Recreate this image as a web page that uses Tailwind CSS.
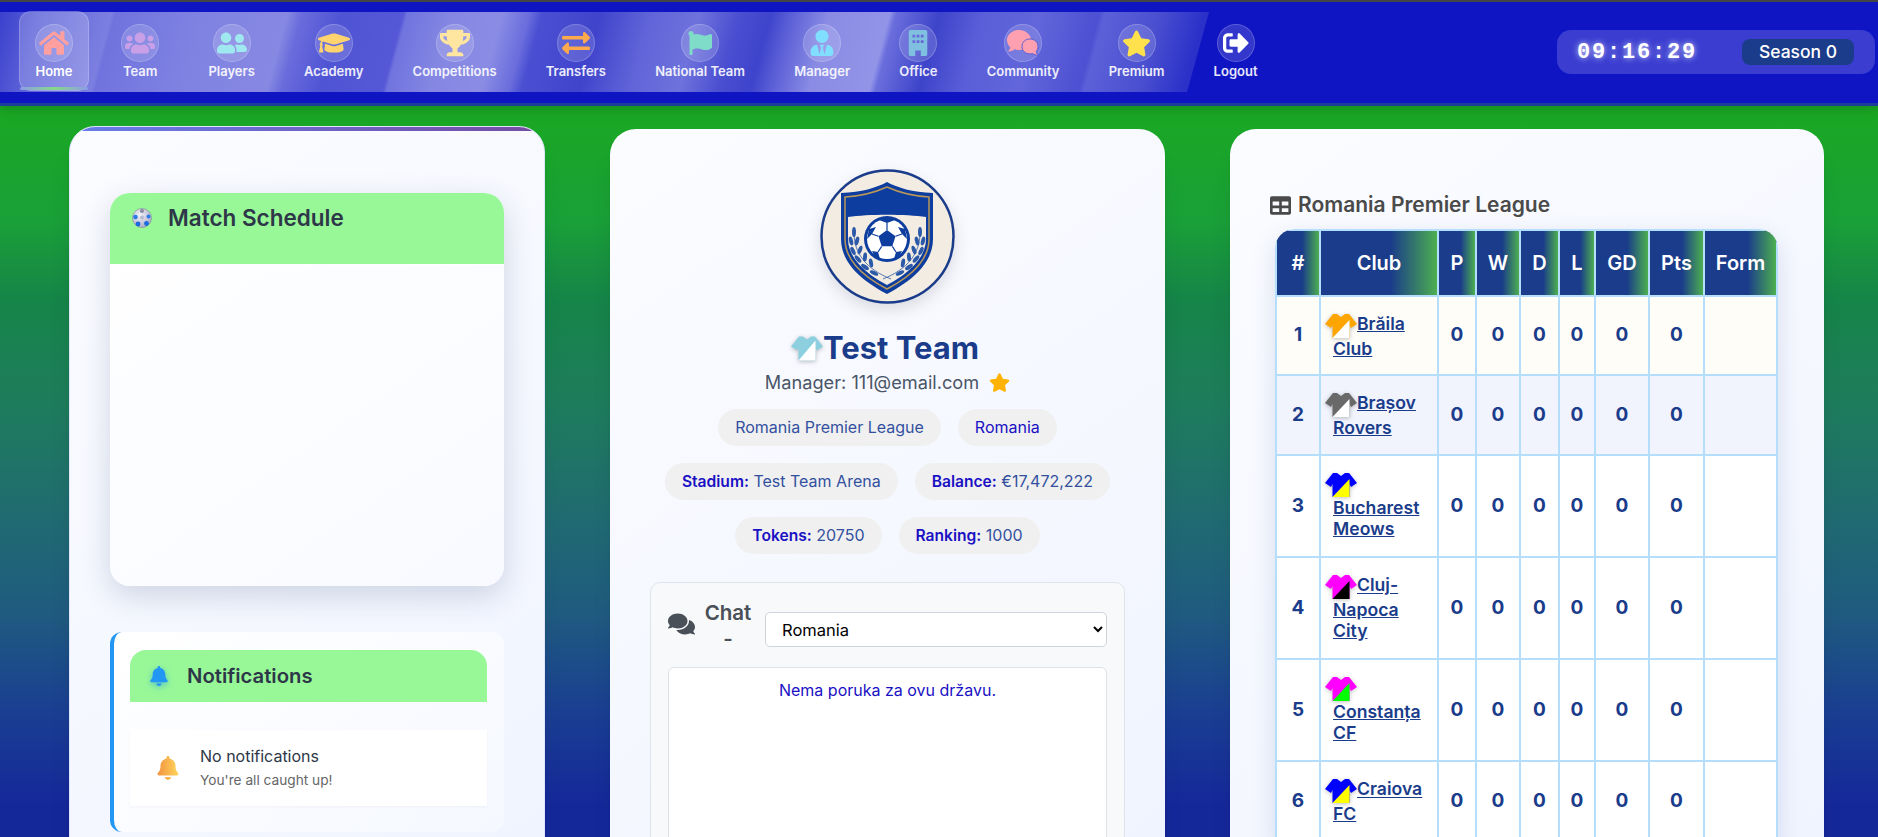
<!DOCTYPE html>
<html lang="en">
<head>
    <meta charset="UTF-8" />
    <title>Home - Football Manager</title>
    <script src="https://cdn.jsdelivr.net/npm/@tailwindcss/browser@4"></script>
</head>
<body class="h-screen overflow-hidden font-['Inter',sans-serif] bg-[linear-gradient(180deg,#1aa822_106px,#1aa038_220px,#168548_300px,#1e7c5c_405px,#206a72_523px,#1f5a80_617px,#1a3f92_711px,#15289a_805px)]">

    <!-- Top navigation -->
    <header class="relative z-10 h-[106px] bg-[#1015c4] border-t-2 border-t-[#444444] border-b-[3px] border-b-[#1c3f9a] shadow-[0_4px_12px_rgba(0,0,0,0.15)] flex items-start">
        <div class="absolute left-0 top-[10px] w-[1209px] h-[80px] [clip-path:polygon(0_0,1209px_0,1187px_100%,0_100%)] bg-[linear-gradient(105deg,#3a40cc_0px,#5b60d8_40px,#7c7fe0_108px,#7073dd_112px,#7a7de0_165px,#8082e2_195px,#8688e2_278px,#6a6cdc_292px,#4f54d4_330px,#5558d6_390px,#7074de_394px,#8486e2_435px,#8a8ce4_485px,#6a6ddc_512px,#4a4fd2_524px,#4044cc_580px,#6064d8_628px,#6e72dc_676px,#4a4ed0_715px,#3e44cc_745px,#5a5ed6_764px,#8a8ce4_802px,#9294e8_860px,#6a6edc_866px,#3e44ca_908px,#5a5ed8_950px,#6266da_1005px,#4c50d2_1062px,#5c60d8_1068px,#4a4fd0_1120px,#2a30c8_1165px)]"></div>

        <nav class="relative flex items-start gap-[15.2px] pl-[19px] pt-[9px]">
            <a class="relative flex flex-col items-center w-[70px] h-[80px] pt-[12px] rounded-[12px] border border-white/20 bg-white/20 text-white">
                <span class="flex items-center justify-center w-[38px] h-[38px] rounded-full bg-white/15 border border-white/20">
                    <svg class="w-[30px] h-[30px] fill-[#ff9f9f]" viewBox="0 0 576 512"><path d="M280.37 148.26L96 300.11V464a16 16 0 0 0 16 16l112.06-.29a16 16 0 0 0 15.92-16V368a16 16 0 0 1 16-16h64a16 16 0 0 1 16 16v95.64a16 16 0 0 0 16 16.05L464 480a16 16 0 0 0 16-16V300L295.67 148.26a12.19 12.19 0 0 0-15.3 0zM571.6 251.47L488 182.56V44.05a12 12 0 0 0-12-12h-56a12 12 0 0 0-12 12v72.61L318.47 43a48 48 0 0 0-61 0L4.34 251.47a12 12 0 0 0-1.6 16.9l25.5 31A12 12 0 0 0 45.15 301l235.22-193.74a12.19 12.19 0 0 1 15.3 0L530.9 301a12 12 0 0 0 16.9-1.6l25.5-31a12 12 0 0 0-1.7-16.93z"/></svg>
                </span>
                <span class="text-[13px] font-semibold leading-[18px]">Home</span>
                <span class="absolute left-0 right-0 bottom-[0px] h-[3px] rounded-full bg-[linear-gradient(90deg,#8c9ce8,#86d98a,#8c9ce8)]"></span>
            </a>
            <a class="flex flex-col items-center px-[17px] pt-[13px] text-white/90">
                <span class="flex items-center justify-center w-[38px] h-[38px] rounded-full bg-white/15 border border-white/20">
                    <svg class="w-[30px] h-[30px] fill-[#c9a0e8]" viewBox="0 0 640 512"><path d="M96 224c35.3 0 64-28.7 64-64s-28.7-64-64-64-64 28.7-64 64 28.7 64 64 64zm448 0c35.3 0 64-28.7 64-64s-28.7-64-64-64-64 28.7-64 64 28.7 64 64 64zm32 32h-64c-17.6 0-33.5 7.1-45.1 18.6 40.3 22.1 68.9 62 75.1 109.4h66c17.7 0 32-14.3 32-32v-32c0-35.3-28.7-64-64-64zm-256 0c61.9 0 112-50.1 112-112S381.9 32 320 32 208 82.1 208 144s50.1 112 112 112zm76.8 32h-8.3c-20.8 10-43.9 16-68.5 16s-47.6-6-68.5-16h-8.3C179.6 288 128 339.6 128 403.2V432c0 26.5 21.5 48 48 48h288c26.5 0 48-21.5 48-48v-28.8c0-63.6-51.6-115.2-115.2-115.2zm-223.7-13.4C161.5 263.1 145.6 256 128 256H64c-35.3 0-64 28.7-64 64v32c0 17.7 14.3 32 32 32h65.9c6.3-47.4 34.9-87.3 75.2-109.4z"/></svg>
                </span>
                <span class="text-[13px] font-semibold leading-[18px]">Team</span>
            </a>
            <a class="flex flex-col items-center px-[17px] pt-[13px] text-white/90">
                <span class="flex items-center justify-center w-[38px] h-[38px] rounded-full bg-white/15 border border-white/20">
                    <svg class="w-[30px] h-[30px] fill-[#a0e8f0]" viewBox="0 0 640 512"><path d="M192 256c61.9 0 112-50.1 112-112S253.9 32 192 32 80 82.1 80 144s50.1 112 112 112zm76.8 32h-8.3c-20.8 10-43.9 16-68.5 16s-47.6-6-68.5-16h-8.3C51.6 288 0 339.6 0 403.2V432c0 26.5 21.5 48 48 48h288c26.5 0 48-21.5 48-48v-28.8c0-63.6-51.6-115.2-115.2-115.2zM480 256c53 0 96-43 96-96s-43-96-96-96-96 43-96 96 43 96 96 96zm48 32h-3.8c-13.9 4.8-28.6 8-44.2 8s-30.3-3.2-44.2-8H432c-20.4 0-39.2 5.9-55.7 15.4 24.4 26.3 39.7 61.2 39.7 99.8v38.4c0 2.2-.5 4.3-.6 6.4H592c26.5 0 48-21.5 48-48 0-61.9-50.1-112-112-112z"/></svg>
                </span>
                <span class="text-[13px] font-semibold leading-[18px]">Players</span>
            </a>
            <a class="flex flex-col items-center px-[17px] pt-[13px] text-white/90">
                <span class="flex items-center justify-center w-[38px] h-[38px] rounded-full bg-white/15 border border-white/20">
                    <svg class="w-[32px] h-[30px] fill-[#ffd36e]" viewBox="0 0 640 512"><path d="M622.34 153.2L343.4 67.5c-15.2-4.67-31.6-4.67-46.79 0L17.66 153.2c-23.54 7.23-23.54 38.36 0 45.59l48.63 14.94c-10.67 13.19-17.23 29.28-17.88 46.9C38.78 266.15 32 276.11 32 288c0 10.78 5.68 19.85 13.86 25.65L20.33 428.53C18.11 438.52 25.71 448 35.94 448h56.11c10.24 0 17.84-9.48 15.62-19.47L82.14 313.65C90.32 307.85 96 298.78 96 288c0-11.57-6.47-21.25-15.66-26.87.76-15.02 8.44-28.3 20.69-36.72L296.6 284.5c9.06 2.78 26.44 6.25 46.79 0l278.95-85.7c23.55-7.24 23.55-38.36 0-45.6zM352.79 315.09c-28.53 8.76-52.84 3.92-65.59 0l-145.02-44.55L128 384c0 35.35 85.96 64 192 64s192-28.65 192-64l-14.18-113.47-145.03 44.56z"/></svg>
                </span>
                <span class="text-[13px] font-semibold leading-[18px]">Academy</span>
            </a>
            <a class="flex flex-col items-center px-[17px] pt-[13px] text-white/90">
                <span class="flex items-center justify-center w-[38px] h-[38px] rounded-full bg-white/15 border border-white/20">
                    <svg class="w-[30px] h-[28px] fill-[#ffe6a0]" viewBox="0 0 576 512"><path d="M552 64H448V24c0-13.3-10.7-24-24-24H152c-13.3 0-24 10.7-24 24v40H24C10.7 64 0 74.7 0 88v56c0 35.7 22.5 72.4 61.9 100.7 31.5 22.7 69.8 37.1 110 41.7C203.3 338.5 240 360 240 360v72h-48c-35.3 0-64 20.7-64 56v12c0 6.6 5.4 12 12 12h296c6.6 0 12-5.4 12-12v-12c0-35.3-28.7-56-64-56h-48v-72s36.7-21.5 68.1-73.6c40.3-4.6 78.6-19 110-41.7 39.3-28.3 61.9-65 61.9-100.7V88c0-13.3-10.7-24-24-24zM99.3 192.8C74.9 175.2 64 155.6 64 144v-16h64.2c1 32.6 5.8 61.2 12.8 86.2-15.1-5.2-29.2-12.4-41.7-21.4zM512 144c0 16.1-17.7 36.1-35.3 48.8-12.5 9-26.7 16.2-41.8 21.4 7-25 11.8-53.6 12.8-86.2H512v16z"/></svg>
                </span>
                <span class="text-[13px] font-semibold leading-[18px]">Competitions</span>
            </a>
            <a class="flex flex-col items-center px-[17px] pt-[13px] text-white/90">
                <span class="flex items-center justify-center w-[38px] h-[38px] rounded-full bg-white/15 border border-white/20">
                    <svg class="w-[28px] h-[28px] fill-[#ffa94d]" viewBox="0 0 512 512"><path d="M0 168v-16c0-13.255 10.745-24 24-24h360V80c0-21.367 25.899-32.042 40.971-16.971l80 80c9.372 9.373 9.372 24.569 0 33.941l-80 80C409.956 271.982 384 261.456 384 240v-48H24c-13.255 0-24-10.745-24-24zm488 152H128v-48c0-21.314-25.862-32.08-40.971-16.971l-80 80c-9.372 9.373-9.372 24.569 0 33.941l80 80C102.057 463.997 128 453.437 128 432v-48h360c13.255 0 24-10.745 24-24v-16c0-13.255-10.745-24-24-24z"/></svg>
                </span>
                <span class="text-[13px] font-semibold leading-[18px]">Transfers</span>
            </a>
            <a class="flex flex-col items-center px-[17px] pt-[13px] text-white/90">
                <span class="flex items-center justify-center w-[38px] h-[38px] rounded-full bg-white/15 border border-white/20">
                    <svg class="w-[24px] h-[26px] fill-[#7fdcc8]" viewBox="0 0 512 512"><path d="M349.565 98.783C295.978 98.783 251.721 64 184.348 64c-24.955 0-47.309 4.384-68.045 12.013a55.947 55.947 0 0 0 3.586-23.562C118.117 24.015 94.806 1.206 66.338.048 34.345-1.254 8 24.296 8 56c0 19.026 9.497 35.825 24 45.945V488c0 13.255 10.745 24 24 24h16c13.255 0 24-10.745 24-24v-94.4c28.311-12.064 63.582-22.122 114.435-22.122 53.588 0 97.844 34.783 165.217 34.783 48.169 0 86.667-16.294 122.505-40.858C506.84 359.452 512 349.571 512 339.045v-243.1c0-23.393-24.269-38.87-45.485-29.016-34.338 15.948-76.454 31.854-116.95 31.854z"/></svg>
                </span>
                <span class="text-[13px] font-semibold leading-[18px]">National Team</span>
            </a>
            <a class="flex flex-col items-center px-[17px] pt-[13px] text-white/90">
                <span class="flex items-center justify-center w-[38px] h-[38px] rounded-full bg-white/15 border border-white/20">
                    <svg class="w-[26px] h-[26px] fill-[#80dfff]" viewBox="0 0 448 512"><path d="M224 256c70.7 0 128-57.3 128-128S294.7 0 224 0 96 57.3 96 128s57.3 128 128 128zm95.8 32.6L272 480l-32-136 32-56h-96l32 56-32 136-47.8-191.4C56.9 292 0 350.3 0 422.4V464c0 26.5 21.5 48 48 48h352c26.5 0 48-21.5 48-48v-41.6c0-72.1-56.9-130.4-128.2-133.8z"/></svg>
                </span>
                <span class="text-[13px] font-semibold leading-[18px]">Manager</span>
            </a>
            <a class="flex flex-col items-center px-[17px] pt-[13px] text-white/90">
                <span class="flex items-center justify-center w-[38px] h-[38px] rounded-full bg-white/15 border border-white/20">
                    <svg class="w-[24px] h-[26px] fill-[#7fbfdf]" viewBox="0 0 24 28"><path fill-rule="evenodd" d="M4 0h16a2 2 0 0 1 2 2v24a2 2 0 0 1-2 2h-5v-6h-6v6H4a2 2 0 0 1-2-2V2a2 2 0 0 1 2-2zM6 5v3h3V5zM10.500 5v3h3V5zM15 5v3h3V5zM6 11v3h3v-3zM10.500 11v3h3v-3zM15 11v3h3v-3z"/></svg>
                </span>
                <span class="text-[13px] font-semibold leading-[18px]">Office</span>
            </a>
            <a class="flex flex-col items-center px-[17px] pt-[13px] text-white/90">
                <span class="flex items-center justify-center w-[38px] h-[38px] rounded-full bg-white/15 border border-white/20">
                    <svg class="w-[34px] h-[30px]" viewBox="0 0 34 30"><path fill="#ffa0b0" d="M13 2c6.600 0 12 4.500 12 10s-5.400 10-12 10c-1.500 0-3-.2-4.300-.7C7 22.700 4.600 23.500 2 23.500c1.300-1.300 2.100-2.800 2.300-4.300C2.200 17.400 1 14.800 1 12 1 6.500 6.400 2 13 2z"/><path fill="#ffa0b0" stroke="#5a5fd6" stroke-width="1" d="M24 11c4.700 0 8 3.200 8 7.500 0 1.900-.7 3.700-1.800 5 .2 1.400.9 2.700 2 3.800-2.200 0-4.100-.6-5.600-1.800-.8.300-1.700.4-2.600.4-4.700 0-8-3.200-8-7.400 0-4.300 3.300-7.500 8-7.500z"/></svg>
                </span>
                <span class="text-[13px] font-semibold leading-[18px]">Community</span>
            </a>
            <a class="flex flex-col items-center px-[17px] pt-[13px] text-white/90">
                <span class="flex items-center justify-center w-[38px] h-[38px] rounded-full bg-white/15 border border-white/20">
                    <svg class="w-[29px] h-[29px] fill-[#ffe14d]" viewBox="0 0 576 512"><path d="M259.3 17.8L194 150.2 47.9 171.5c-26.2 3.8-36.7 36.1-17.7 54.6l105.7 103-25 145.5c-4.5 26.3 23.2 46 46.4 33.7L288 439.6l130.7 68.7c23.2 12.2 50.9-7.4 46.4-33.7l-25-145.5 105.7-103c19-18.5 8.5-50.800-17.700-54.600L382 150.200 316.700 17.800c-11.700-23.600-45.600-23.900-57.400 0z"/></svg>
                </span>
                <span class="text-[13px] font-semibold leading-[18px]">Premium</span>
            </a>
            <a class="flex flex-col items-center px-[17px] pt-[13px] text-white/90">
                <span class="flex items-center justify-center w-[38px] h-[38px] rounded-full bg-white/15 border border-white/20">
                    <svg class="w-[26px] h-[26px] fill-white" viewBox="0 0 512 512"><path d="M497 273L329 441c-15 15-41 4.500-41-17v-96H152c-13.300 0-24-10.700-24-24v-96c0-13.300 10.700-24 24-24h136V88c0-21.400 25.900-32 41-17l168 168c9.300 9.400 9.300 24.600 0 34zM192 436v-40c0-6.600-5.400-12-12-12H96c-17.700 0-32-14.300-32-32V160c0-17.700 14.300-32 32-32h84c6.600 0 12-5.400 12-12V76c0-6.600-5.400-12-12-12H96c-53 0-96 43-96 96v192c0 53 43 96 96 96h84c6.600 0 12-5.400 12-12z"/></svg>
                </span>
                <span class="text-[13px] font-semibold leading-[18px]">Logout</span>
            </a>
        </nav>

        <!-- Clock and season -->
        <div class="ml-auto mr-[3px] mt-[28px] flex items-center justify-between w-[318px] h-[44px] pl-[20px] pr-[21px] rounded-[14px] bg-[#3a3dd0] text-white">
            <span class="font-['Liberation_Mono',monospace] font-bold text-[22px] tracking-[1.8px] [text-shadow:0_0_6px_rgba(255,255,255,0.8)]">09:16:29</span>
            <span class="flex items-center justify-center w-[112px] h-[26px] rounded-[8px] bg-[#1a3c8a] text-[17.5px] font-medium">Season 0</span>
        </div>
    </header>

    <main class="flex items-start pl-[69px] pt-[23px] gap-[65px]">

        <!-- Left column -->
        <section class="relative -mt-[3px] w-[476px] h-[760px] px-[40px] pt-[66px] rounded-[26px] overflow-hidden border border-[#dfe5fb] bg-[linear-gradient(145deg,#fbfcff,#f0f4ff)] shadow-xl">
            <div class="absolute left-0 right-0 top-0 h-[4px] bg-[linear-gradient(90deg,#667eea,#764ba2)]"></div>

            <div class="h-[393px] rounded-[20px] overflow-hidden bg-[linear-gradient(145deg,#ffffff,#f8faff)] shadow-[0_10px_30px_rgba(30,50,100,0.18)]">
                <div class="flex items-start h-[72px] pl-[22px] pt-[9px] gap-[16px] bg-[#98f898] border-b border-white">
                    <svg class="w-[20px] h-[20px] mt-[6px]" viewBox="0 0 20 20"><defs><radialGradient id="ballGrad" cx="0.4" cy="0.35" r="0.7"><stop offset="0" stop-color="#f4f4fb"/><stop offset="1" stop-color="#a8a8c4"/></radialGradient></defs><circle cx="10" cy="10" r="9.500" fill="url(#ballGrad)" stroke="#77778f" stroke-width="0.500"/><circle cx="10" cy="3" r="2" fill="#8a8aa6"/><circle cx="3.500" cy="9" r="2.300" fill="#2a7ae8"/><circle cx="16.500" cy="8.500" r="2" fill="#2a7ae8"/><circle cx="6" cy="16" r="2.400" fill="#1c68e0"/><circle cx="14.500" cy="15.500" r="2.400" fill="#1c68e0"/><circle cx="10" cy="9.500" r="2" fill="#b8b8d0"/></svg>
                    <h2 class="text-[22.5px] font-semibold leading-[32px] text-[#2d3748]">Match Schedule</h2>
                </div>
            </div>

            <div class="relative mt-[46px] h-[200px] pl-[16px] pr-[17px] pt-[18px] rounded-[12px] border-l-4 border-l-[#2196f3] bg-[linear-gradient(145deg,#ffffff,#f5f8ff)]">
                <div class="flex items-center h-[52px] pl-[20px] gap-[19px] rounded-t-[16px] bg-[#98f898]">
                    <svg class="w-[18px] h-[20px] fill-[#2196f3] drop-shadow-[0_2px_3px_rgba(33,150,243,0.6)]" viewBox="0 0 448 512"><path d="M224 512c35.320 0 63.970-28.650 63.970-64H160.030c0 35.350 28.650 64 63.970 64zm215.390-149.710c-19.320-20.760-55.470-51.990-55.470-154.290 0-77.700-54.480-139.900-127.940-155.160V32c0-17.670-14.320-32-31.980-32s-31.980 14.330-31.980 32v20.840C118.560 68.100 64.080 130.300 64.080 208c0 102.300-36.150 133.530-55.470 154.290-6 6.450-8.660 14.160-8.610 21.710.11 16.400 12.980 32 32.100 32h383.800c19.120 0 32-15.600 32.100-32 .05-7.550-2.610-15.270-8.610-21.710z"/></svg>
                    <h3 class="text-[20.3px] font-semibold text-[#2d3748]">Notifications</h3>
                </div>
                <div class="mt-[28px] flex items-center h-[76px] pl-[27px] gap-[21px] bg-white shadow-[0_1px_3px_rgba(0,0,0,0.04)]">
                    <svg class="w-[22px] h-[24px]" viewBox="0 0 448 512"><defs><linearGradient id="bellGrad" x1="0" x2="1" y1="0" y2="0"><stop offset="0" stop-color="#f2933f"/><stop offset="1" stop-color="#ffd65c"/></linearGradient></defs><path fill="url(#bellGrad)" d="M224 512c35.320 0 63.970-28.650 63.970-64H160.030c0 35.350 28.650 64 63.970 64zm215.390-149.710c-19.320-20.760-55.470-51.990-55.470-154.290 0-77.700-54.480-139.900-127.940-155.160V32c0-17.670-14.320-32-31.980-32s-31.980 14.330-31.980 32v20.840C118.560 68.100 64.080 130.300 64.080 208c0 102.300-36.150 133.530-55.470 154.290-6 6.450-8.660 14.160-8.610 21.710.11 16.400 12.980 32 32.100 32h383.800c19.120 0 32-15.600 32.100-32 .05-7.550-2.610-15.270-8.610-21.710z"/></svg>
                    <div>
                        <p class="text-[16px] leading-[24px] text-[#2d3748]">No notifications</p>
                        <p class="text-[13.7px] leading-[24px] text-[#666666]">You're all caught up!</p>
                    </div>
                </div>
            </div>
        </section>

        <!-- Center column -->
        <section class="flex flex-col items-center w-[555px] h-[760px] px-[40px] pt-[40px] rounded-[26px] bg-[linear-gradient(145deg,#fbfcff,#f0f4ff)] shadow-xl">
            <svg class="w-[135px] h-[135px] drop-shadow-[0_6px_8px_rgba(0,0,0,0.12)]" viewBox="0 0 135 135">
                <circle cx="67.500" cy="67.500" r="66" fill="#f3ece2" stroke="#1a3c8a" stroke-width="2.500"/>
                <path d="M67 13 C 78 19 92 23 113 24 L 113 70 C 113 95 90 113 67 125 C 44 113 21 95 21 70 L 21 24 C 42 23 56 19 67 13 Z" fill="#0d3d9e"/>
                <path d="M67 18 C 78 23 92 27 109 28 L 109 70 C 109 92 88 109 67 120 C 46 109 25 92 25 70 L 25 28 C 42 27 56 23 67 18 Z" fill="#0d3d9e" stroke="#b8975a" stroke-width="1.500"/>
                <path d="M28 48 C 48 45 86 45 106 48 L 106 70 C 106 90 86 106 67 116 C 48 106 28 90 28 70 Z" fill="#f3ece2"/>
                <circle cx="67" cy="70" r="23" fill="#0d3d9e"/>
                <circle cx="67" cy="70" r="20" fill="#ffffff"/>
                <polygon points="67,61 75.500,67.200 72.300,77.300 61.700,77.300 58.500,67.200" fill="#0d3d9e"/>
                <path d="M67 61 V 54 M75.500 67.200 L 82 65 M72.300 77.300 L 76 83 M61.700 77.300 L 58 83 M58.500 67.200 L 52 65" stroke="#0d3d9e" stroke-width="1.200"/>
                <path d="M59 51 L 67 54 L 75 51 L 67 48 Z M 47 70 L 52 65 L 56 58 L 49 60 Z M 87 70 L 82 65 L 78 58 L 85 60 Z M 52 82 L 58 83 L 60 90 L 55 88 Z M 82 82 L 76 83 L 74 90 L 79 88 Z" fill="#0d3d9e"/>
                <g id="laurel" fill="#2c5aa8">
                    <ellipse cx="34" cy="63" rx="2" ry="5"/>
                    <ellipse cx="31" cy="72" rx="2" ry="4.500" transform="rotate(-15 31 72)"/>
                    <ellipse cx="37" cy="72" rx="2" ry="4.500" transform="rotate(15 37 72)"/>
                    <ellipse cx="33" cy="82" rx="2" ry="4.500" transform="rotate(-25 33 82)"/>
                    <ellipse cx="40" cy="81" rx="2" ry="4.500" transform="rotate(20 40 81)"/>
                    <ellipse cx="38" cy="90" rx="2" ry="4.500" transform="rotate(-40 38 90)"/>
                    <ellipse cx="45" cy="88" rx="2" ry="4.500" transform="rotate(5 45 88)"/>
                    <ellipse cx="45" cy="98" rx="2" ry="4.500" transform="rotate(-55 45 98)"/>
                    <ellipse cx="51" cy="94" rx="2" ry="4.500" transform="rotate(-10 51 94)"/>
                    <ellipse cx="54" cy="104" rx="2" ry="4.500" transform="rotate(-65 54 104)"/>
                    <path d="M34 64 C 34 84 46 100 71 110" fill="none" stroke="#2c5aa8" stroke-width="0.800"/>
                </g>
                <use href="#laurel" transform="translate(134 0) scale(-1 1)"/>
            </svg>

            <h1 class="mt-[26px] pr-[5px] flex items-center text-[31px] font-bold leading-[36px] text-[#1a3c8a]">
                <svg class="w-[32px] h-[26px] drop-shadow-[0_1px_2px_rgba(0,0,0,0.25)]" viewBox="0 0 32 25"><polygon points="0,11 8,1 12,1 16,4 20,1 24,1 32,11 26,15 24.500,12 24.500,25 7.500,25 7.500,12 6,15" fill="#8ccfdf"/><polygon points="24.500,5 24.500,25 7.500,25" fill="#ffffff"/></svg>
                Test Team
            </h1>
            <p class="mt-[4px] flex items-center text-[18.2px] leading-[24px] text-[#4a5568]">
                Manager: 111@email.com
                <svg class="ml-[10px] w-[21px] h-[19px] fill-[#ffb300]" viewBox="0 0 576 512"><path d="M259.3 17.8L194 150.2 47.9 171.5c-26.2 3.8-36.7 36.1-17.7 54.6l105.7 103-25 145.5c-4.5 26.3 23.2 46 46.4 33.7L288 439.6l130.7 68.7c23.2 12.2 50.9-7.4 46.4-33.7l-25-145.5 105.7-103c19-18.5 8.5-50.800-17.700-54.600L382 150.200 316.700 17.800c-11.700-23.600-45.600-23.900-57.400 0z"/></svg>
            </p>

            <div class="mt-[15px] flex flex-wrap justify-center gap-x-[17px] gap-y-[17px] text-[16px] leading-[37px] text-[#33509f]">
                <span class="h-[37px] px-[17px] rounded-full bg-[#f0f0f0]">Romania Premier League</span>
                <span class="h-[37px] px-[17px] rounded-full bg-[#f0f0f0] text-[#1a10c4]">Romania</span>
                <span class="h-[37px] px-[17px] rounded-full bg-[#f0f0f0]"><b class="text-[15.6px] font-semibold text-[#1a10c4]">Stadium:</b> Test Team Arena</span>
                <span class="h-[37px] px-[17px] rounded-full bg-[#f0f0f0]"><b class="text-[15.6px] font-semibold text-[#1a10c4]">Balance:</b> €17,472,222</span>
                <span class="h-[37px] px-[17px] rounded-full bg-[#f0f0f0]"><b class="text-[15.6px] font-semibold text-[#1a10c4]">Tokens:</b> 20750</span>
                <span class="h-[37px] px-[17px] rounded-full bg-[#f0f0f0]"><b class="text-[15.6px] font-semibold text-[#1a10c4]">Ranking:</b> 1000</span>
            </div>

            <div class="mt-[28px] w-[475px] h-[300px] shrink-0 px-[17px] pt-[17px] rounded-[10px] border border-[#dfe3ea] bg-[#f8f9fa]">
                <div class="flex items-center gap-[8px]">
                    <svg class="mb-[4px] w-[27px] h-[24px] fill-[#495057]" viewBox="0 0 576 512"><path d="M416 192c0-88.400-93.100-160-208-160S0 103.600 0 192c0 34.300 14.100 65.900 38 92-13.400 30.200-35.500 54.200-35.800 54.500-2.200 2.300-2.800 5.700-1.500 8.700S4.800 352 8 352c36.600 0 66.900-12.300 88.700-25 32.200 15.700 70.300 25 111.300 25 114.900 0 208-71.600 208-160zm122 220c23.900-26 38-57.700 38-92 0-66.900-53.500-124.200-129.300-148.100.9 6.600 1.300 13.300 1.300 20.100 0 105.900-107.700 192-240 192-10.800 0-21.300-.8-31.700-1.900C207.800 439.600 281.800 480 368 480c41 0 79.100-9.200 111.300-25 21.800 12.700 52.100 25 88.700 25 3.200 0 6.100-1.900 7.300-4.800 1.300-2.900.7-6.300-1.500-8.700-.3-.3-22.400-24.200-35.800-54.500z"/></svg>
                    <span class="w-[50px] text-center text-[20.5px] font-semibold leading-[26px] text-[#495057]">Chat -</span>
                    <select class="mt-[7px] ml-[4px] flex-1 h-[35px] px-[12px] rounded-[5px] border border-[#ced4da] bg-white text-[16.5px] text-black">
                        <option>Romania</option>
                    </select>
                </div>
                <div class="mt-[15px] h-[200px] pt-[11px] rounded-[6px] border border-[#dee2e6] bg-white text-center text-[16px] leading-[22px] text-[#1a10c4]">Nema poruka za ovu državu.</div>
            </div>
        </section>

        <!-- Right column -->
        <section class="w-[594px] h-[760px] px-[40px] pt-[60px] rounded-[26px] bg-[linear-gradient(145deg,#fbfcff,#f0f4ff)] shadow-xl">
            <h2 class="flex items-center gap-[7px] text-[21px] font-semibold leading-[32px] text-[#4a4a4a]">
                <svg class="w-[21px] h-[21px] fill-[#4a4a4a]" viewBox="0 0 512 512"><path d="M464 32H48C21.490 32 0 53.490 0 80v352c0 26.510 21.490 48 48 48h416c26.510 0 48-21.490 48-48V80c0-26.510-21.490-48-48-48zM224 416H64v-96h160v96zm0-160H64v-96h160v96zm224 160H288v-96h160v96zm0-160H288v-96h160v96z"/></svg>
                Romania Premier League
            </h2>
            <div class="mt-[8px] ml-[5px] w-[503px] rounded-t-[20px] overflow-hidden shadow-[0_8px_24px_rgba(30,60,140,0.15)]">
                <table class="w-full table-fixed border-collapse text-center text-[19px] font-bold text-[#1a3c8a]">
                    <colgroup>
                        <col class="w-[44px]" /><col class="w-[118px]" /><col class="w-[38px]" /><col class="w-[44px]" /><col class="w-[39px]" /><col class="w-[36px]" /><col class="w-[54px]" /><col class="w-[55px]" /><col />
                    </colgroup>
                    <thead>
                        <tr class="h-[66px] text-white text-[20px]">
                            <th class="border-2 border-[#b5defc] font-semibold bg-[linear-gradient(90deg,#1a3c8a_60%,#4caf50)]">#</th>
                            <th class="border-2 border-[#b5defc] font-semibold bg-[linear-gradient(90deg,#1a3c8a_60%,#4caf50)]">Club</th>
                            <th class="border-2 border-[#b5defc] font-semibold bg-[linear-gradient(90deg,#1a3c8a_60%,#4caf50)]">P</th>
                            <th class="border-2 border-[#b5defc] font-semibold bg-[linear-gradient(90deg,#1a3c8a_60%,#4caf50)]">W</th>
                            <th class="border-2 border-[#b5defc] font-semibold bg-[linear-gradient(90deg,#1a3c8a_60%,#4caf50)]">D</th>
                            <th class="border-2 border-[#b5defc] font-semibold bg-[linear-gradient(90deg,#1a3c8a_60%,#4caf50)]">L</th>
                            <th class="border-2 border-[#b5defc] font-semibold bg-[linear-gradient(90deg,#1a3c8a_60%,#4caf50)]">GD</th>
                            <th class="border-2 border-[#b5defc] font-semibold bg-[linear-gradient(90deg,#1a3c8a_60%,#4caf50)]">Pts</th>
                            <th class="border-2 border-[#b5defc] font-semibold bg-[linear-gradient(90deg,#1a3c8a_60%,#4caf50)]">Form</th>
                        </tr>
                    </thead>
                    <tbody class="[&_td]:border-2 [&_td]:border-[#b5defc]">
                        <tr class="bg-[#fffdf8]">
                            <td>1</td>
                            <td class="py-[15.7px] pl-[12px] pr-[5px] text-left text-[17.6px] font-semibold leading-[21px]"><svg class="inline-block align-middle -ml-[8px] w-[32px] h-[25px] drop-shadow-[0_1px_2px_rgba(0,0,0,0.25)]" viewBox="0 0 32 25"><polygon points="0,11 8,1 12,1 16,4 20,1 24,1 32,11 26,15 24.500,12 24.500,25 7.500,25 7.500,12 6,15" fill="#ffa500"/><polygon points="24.500,7 24.500,25 7.500,25" fill="#ffffff"/></svg><a class="underline">Brăila Club</a></td>
                            <td>0</td><td>0</td><td>0</td><td>0</td><td>0</td><td>0</td><td></td>
                        </tr>
                        <tr class="bg-[#f1f3fd]">
                            <td>2</td>
                            <td class="py-[15.7px] pl-[12px] pr-[5px] text-left text-[17.6px] font-semibold leading-[21px]"><svg class="inline-block align-middle -ml-[8px] w-[32px] h-[25px] drop-shadow-[0_1px_2px_rgba(0,0,0,0.25)]" viewBox="0 0 32 25"><polygon points="0,11 8,1 12,1 16,4 20,1 24,1 32,11 26,15 24.500,12 24.500,25 7.500,25 7.500,12 6,15" fill="#696969"/><polygon points="24.500,7 24.500,25 7.500,25" fill="#ffffff"/></svg><a class="underline">Brașov Rovers</a></td>
                            <td>0</td><td>0</td><td>0</td><td>0</td><td>0</td><td>0</td><td></td>
                        </tr>
                        <tr class="bg-white">
                            <td>3</td>
                            <td class="py-[16.5px] pl-[12px] pr-[5px] text-left text-[17.6px] font-semibold leading-[21px]"><svg class="inline-block align-middle -ml-[8px] w-[32px] h-[25px] drop-shadow-[0_1px_2px_rgba(0,0,0,0.25)]" viewBox="0 0 32 25"><polygon points="0,11 8,1 12,1 16,4 20,1 24,1 32,11 26,15 24.500,12 24.500,25 7.500,25 7.500,12 6,15" fill="#0000ff"/><polygon points="24.500,7 24.500,25 7.500,25" fill="#ffff00"/></svg><a class="underline">Bucharest Meows</a></td>
                            <td>0</td><td>0</td><td>0</td><td>0</td><td>0</td><td>0</td><td></td>
                        </tr>
                        <tr class="bg-white">
                            <td>4</td>
                            <td class="py-[16.5px] pl-[12px] pr-[5px] text-left text-[17.6px] font-semibold leading-[21px]"><svg class="inline-block align-middle -ml-[8px] w-[32px] h-[25px] drop-shadow-[0_1px_2px_rgba(0,0,0,0.25)]" viewBox="0 0 32 25"><polygon points="0,11 8,1 12,1 16,4 20,1 24,1 32,11 26,15 24.500,12 24.500,25 7.500,25 7.500,12 6,15" fill="#ff00ff"/><polygon points="24.500,7 24.500,25 7.500,25" fill="#000000"/></svg><a class="underline">Cluj-Napoca City</a></td>
                            <td>0</td><td>0</td><td>0</td><td>0</td><td>0</td><td>0</td><td></td>
                        </tr>
                        <tr class="bg-white">
                            <td>5</td>
                            <td class="py-[16.5px] pl-[12px] pr-[5px] text-left text-[17.6px] font-semibold leading-[21px]"><svg class="inline-block align-middle -ml-[8px] w-[32px] h-[25px] drop-shadow-[0_1px_2px_rgba(0,0,0,0.25)]" viewBox="0 0 32 25"><polygon points="0,11 8,1 12,1 16,4 20,1 24,1 32,11 26,15 24.500,12 24.500,25 7.500,25 7.500,12 6,15" fill="#ff00ff"/><polygon points="24.500,7 24.500,25 7.500,25" fill="#00ff00"/></svg><a class="underline">Constanța CF</a></td>
                            <td>0</td><td>0</td><td>0</td><td>0</td><td>0</td><td>0</td><td></td>
                        </tr>
                        <tr class="bg-white">
                            <td>6</td>
                            <td class="py-[16.5px] pl-[12px] pr-[5px] text-left text-[17.6px] font-semibold leading-[21px]"><svg class="inline-block align-middle -ml-[8px] w-[32px] h-[25px] drop-shadow-[0_1px_2px_rgba(0,0,0,0.25)]" viewBox="0 0 32 25"><polygon points="0,11 8,1 12,1 16,4 20,1 24,1 32,11 26,15 24.500,12 24.500,25 7.500,25 7.500,12 6,15" fill="#0000ff"/><polygon points="24.500,7 24.500,25 7.500,25" fill="#ffff00"/></svg><a class="underline">Craiova FC</a></td>
                            <td>0</td><td>0</td><td>0</td><td>0</td><td>0</td><td>0</td><td></td>
                        </tr>
                    </tbody>
                </table>
            </div>
        </section>
    </main>
</body>
</html>
